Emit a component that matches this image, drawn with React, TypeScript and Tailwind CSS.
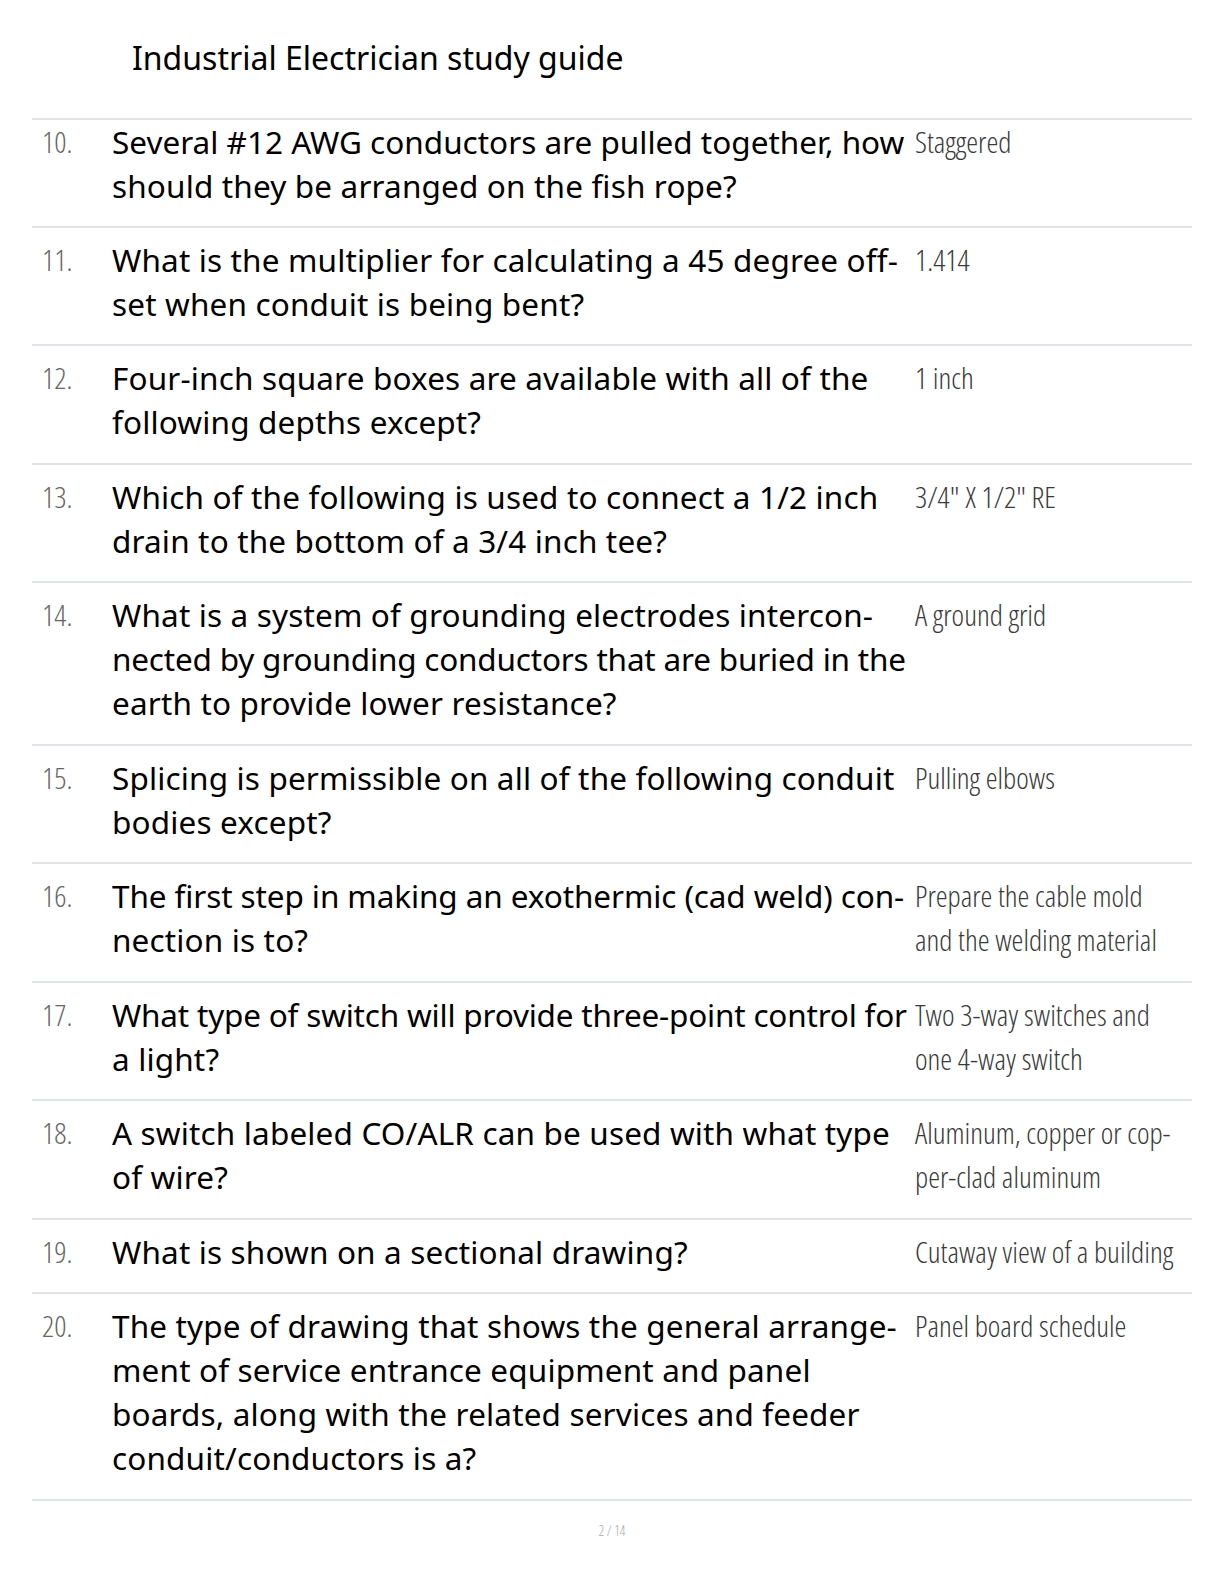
import React from "react";

type Row = { n: string; q: [string, string?][]; a: string[]; first?: boolean };

const T = "tracking-[0.15px]";

const rows: Row[] = [
  { n: "10.", q: [["Several #12 AWG conductors are pulled together, how", "tracking-[0px]"], ["should they be arranged on the fish rope?"]], a: ["Staggered"], first: true },
  { n: "11.", q: [["What is the multiplier for calculating a 45 degree off-"], ["set when conduit is being bent?"]], a: ["1.414"] },
  { n: "12.", q: [["Four-inch square boxes are available with all of the"], ["following depths except?"]], a: ["1 inch"] },
  { n: "13.", q: [["Which of the following is used to connect a 1/2 inch"], ["drain to the bottom of a 3/4 inch tee?"]], a: ["3/4\" X 1/2\" RE"] },
  { n: "14.", q: [["What is a system of grounding electrodes intercon-"], ["nected by grounding conductors that are buried in the", "tracking-[-0.2px]"], ["earth to provide lower resistance?"]], a: ["A ground grid"] },
  { n: "15.", q: [["Splicing is permissible on all of the following conduit"], ["bodies except?"]], a: ["Pulling elbows"] },
  { n: "16.", q: [["The first step in making an exothermic (cad weld) con-", "tracking-[-0.1px]"], ["nection is to?"]], a: ["Prepare the cable mold", "and the welding material"] },
  { n: "17.", q: [["What type of switch will provide three-point control for", "tracking-[-0.2px]"], ["a light?"]], a: ["Two 3-way switches and", "one 4-way switch"] },
  { n: "18.", q: [["A switch labeled CO/ALR can be used with what type"], ["of wire?"]], a: ["Aluminum, copper or cop-", "per-clad aluminum"] },
  { n: "19.", q: [["What is shown on a sectional drawing?"]], a: ["Cutaway view of a building"] },
  { n: "20.", q: [["The type of drawing that shows the general arrange-"], ["ment of service entrance equipment and panel"], ["boards, along with the related services and feeder"], ["conduit/conductors is a?"]], a: ["Panel board schedule"] },
];

export default function App() {
  return (
    <div className="w-[1224px] min-h-[1584px] bg-white font-['Noto_Sans',sans-serif] text-black">
      <div className="pt-[36px] pl-[132px] text-[32px] leading-[44px] h-[118px]">
        Industrial Electrician study guide
      </div>
      <div className="ml-[32px] w-[1160px] border-b-2 border-[#dfe2e6]">
        {rows.map((r) => (
          <div
            key={r.n}
            className={`grid grid-cols-[80px_803px_1fr] border-t-2 border-[#dfe2e6] ${r.first ? "pt-0 pb-[17.5px]" : "pt-[10px] pb-[18.5px]"}`}
          >
            <div className="pl-[10px] font-['Open_Sans',sans-serif] text-[30px] leading-[44px] font-light text-[#666] [font-stretch:75%]">{r.n}</div>
            <div className="text-[31.5px] leading-[44px] text-black">
              {r.q.map(([l, t], i) => (
                <div key={i} className={`whitespace-nowrap ${t ?? T}`}>{l}</div>
              ))}
            </div>
            <div className="font-['Open_Sans',sans-serif] text-[30px] leading-[44px] font-light text-[#3a3a3a] [font-stretch:75%]">
              {r.a.map((l, i) => (
                <div key={i} className="whitespace-nowrap">{l}</div>
              ))}
            </div>
          </div>
        ))}
      </div>
      <div className="pt-[19px] text-center font-['Open_Sans',sans-serif] text-[14px] font-light text-[#aaa] [font-stretch:75%]">2 / 14</div>
    </div>
  );
}
